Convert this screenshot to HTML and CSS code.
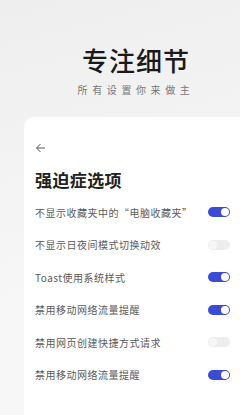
FILE: index.html
```html
<!DOCTYPE html>
<html><head>
  <meta charset="UTF-8">
  <meta name="viewport" content="width=device-width,initial-scale=1.0">
  <title>专注细节</title>
  <link rel="stylesheet" href="styles.css">
</head><body>
<div id="page">
  <div id="head">
    <div class="title">专注细节</div>
    <div class="sub">所有设置你来做主</div>
  </div>
  <div id="card">
    <div class="back">
      <svg width="11" height="10" viewBox="0 0 11 10"><path d="M10 5H1.5M5.5 1L1.5 5L5.5 9" fill="none" stroke="#555" stroke-width="1"/></svg>
    </div>
    <div class="heading">强迫症选项</div>
    <div class="row"><span>不显示收藏夹中的“电脑收藏夹”</span><i class="sw on"></i></div>
    <div class="row"><span>不显示日夜间模式切换动效</span><i class="sw"></i></div>
    <div class="row"><span>Toast使用系统样式</span><i class="sw on"></i></div>
    <div class="row"><span>禁用移动网络流量提醒</span><i class="sw on"></i></div>
    <div class="row"><span>禁用网页创建快捷方式请求</span><i class="sw"></i></div>
    <div class="row"><span>禁用移动网络流量提醒</span><i class="sw on"></i></div>
  </div>
</div>
</body>
</html>
```
FILE: styles.css
```css
html,body{
  height:100%;
  margin:0;
}
body{
  background:linear-gradient(165deg,#eeeeee 0%,#f6f6f6 60%,#f8f8f8 100%);
  font-family:"Noto Sans CJK SC","Noto Sans",sans-serif;
  overflow:hidden;
}
#page{
  display:flex;
  flex-direction:column;
  height:100%;
}
#head{
  padding:45px 0 0 32px;
  display:flex;
  flex-direction:column;
  align-items:center;
}
.title{
  font-size:26px;
  line-height:30px;
  font-weight:500;
  color:#1a1a1a;
  letter-spacing:1px;
}
.sub{
  margin-top:8px;
  font-size:10px;
  line-height:14px;
  color:#777;
  letter-spacing:4.6px;
}
#card{
  flex:1;
  margin:20px 0 0 24px;
  background:#fff;
  border-radius:10px 0 0 0;
  padding:24px 10px 0 11px;
}
.back{
  height:14px;
  display:flex;
  align-items:center;
}
.heading{
  margin-top:14px;
  font-size:17px;
  line-height:22px;
  font-weight:700;
  color:#222;
  letter-spacing:0.4px;
}
.row{
  height:32.5px;
  display:flex;
  align-items:center;
  justify-content:space-between;
  font-size:10px;
  color:#5a5a5a;
  letter-spacing:0.5px;
}
.heading+.row{
  margin-top:5px;
}
.sw{
  width:22px;
  height:10px;
  border-radius:5px;
  background:#ededed;
  position:relative;
  flex:none;
}
.sw::after{
  content:"";
  position:absolute;
  top:1px;
  left:1px;
  width:8px;
  height:8px;
  border-radius:50%;
  background:#f7f7f7;
}
.sw.on{
  background:#3a4cd6;
}
.sw.on::after{
  left:13px;
  background:#fff;
}
```
